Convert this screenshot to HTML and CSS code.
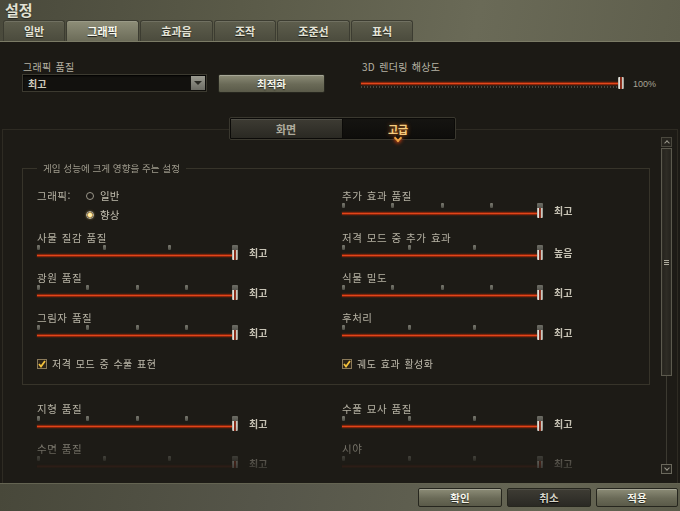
FILE: index.html
```html
<!DOCTYPE html>
<html lang="ko">
<head>
<meta charset="UTF-8">
<title>설정</title>
<link rel="stylesheet" href="styles.css">
</head>
<body>
<div class="window">
  <header class="header">
    <h1 class="title">설정</h1>
    <nav class="tabs">
      <div class="tab short">일반</div>
      <div class="tab active">그래픽</div>
      <div class="tab">효과음</div>
      <div class="tab short">조작</div>
      <div class="tab">조준선</div>
      <div class="tab short">표식</div>
    </nav>
  </header>

  <main class="content">
    <section class="top-controls">
      <div class="control">
        <div class="label">그래픽 품질</div>
        <div class="quality-row">
          <div class="select">최고<span class="select-arrow"></span></div>
          <button class="btn btn-light btn-optimize">최적화</button>
        </div>
      </div>
      <div class="control">
        <div class="label">3D 렌더링 해상도</div>
        <div class="res-row">
          <div class="res-slider">
            <div class="res-track"></div>
            <div class="res-dots"></div>
            <div class="handle res-handle"></div>
          </div>
          <span class="res-value">100%</span>
        </div>
      </div>
    </section>

    <div class="subtabs-wrap">
      <div class="subtabs">
        <div class="subtab">화면</div>
        <div class="subtab active">고급</div>
      </div>
    </div>

    <section class="panel">
      <div class="scroll-view">
        <fieldset class="group">
          <legend>게임 성능에 크게 영향을 주는 설정</legend>
          <div class="grid">
            <div class="radio-setting">
              <span class="radio-title">그래픽:</span>
              <div class="radios">
                <label class="radio"><span class="dot"></span>일반</label>
                <label class="radio checked"><span class="dot"></span>향상</label>
              </div>
            </div>
            <div class="setting">
              <div class="label">추가 효과 품질</div>
              <div class="slider-row">
                <div class="slider"><div class="ticks"><i></i><i></i><i></i><i></i><i></i></div><div class="track"></div><div class="handle"></div></div>
                <span class="value">최고</span>
              </div>
            </div>

            <div class="setting">
              <div class="label">사물 질감 품질</div>
              <div class="slider-row">
                <div class="slider"><div class="ticks"><i></i><i></i><i></i><i></i></div><div class="track"></div><div class="handle"></div></div>
                <span class="value">최고</span>
              </div>
            </div>
            <div class="setting">
              <div class="label">저격 모드 중 추가 효과</div>
              <div class="slider-row">
                <div class="slider"><div class="ticks"><i></i><i></i><i></i><i></i></div><div class="track"></div><div class="handle"></div></div>
                <span class="value">높음</span>
              </div>
            </div>

            <div class="setting">
              <div class="label">광원 품질</div>
              <div class="slider-row">
                <div class="slider"><div class="ticks"><i></i><i></i><i></i><i></i><i></i></div><div class="track"></div><div class="handle"></div></div>
                <span class="value">최고</span>
              </div>
            </div>
            <div class="setting">
              <div class="label">식물 밀도</div>
              <div class="slider-row">
                <div class="slider"><div class="ticks"><i></i><i></i><i></i><i></i><i></i></div><div class="track"></div><div class="handle"></div></div>
                <span class="value">최고</span>
              </div>
            </div>

            <div class="setting">
              <div class="label">그림자 품질</div>
              <div class="slider-row">
                <div class="slider"><div class="ticks"><i></i><i></i><i></i><i></i><i></i></div><div class="track"></div><div class="handle"></div></div>
                <span class="value">최고</span>
              </div>
            </div>
            <div class="setting">
              <div class="label">후처리</div>
              <div class="slider-row">
                <div class="slider"><div class="ticks"><i></i><i></i><i></i><i></i></div><div class="track"></div><div class="handle"></div></div>
                <span class="value">최고</span>
              </div>
            </div>

            <label class="checkbox"><span class="box"><svg width="8" height="8" viewBox="0 0 8 8"><polyline points="1,4 3,6.5 7,1" fill="none" stroke="#f4c23c" stroke-width="1.8"/></svg></span>저격 모드 중 수풀 표현</label>
            <label class="checkbox"><span class="box"><svg width="8" height="8" viewBox="0 0 8 8"><polyline points="1,4 3,6.5 7,1" fill="none" stroke="#f4c23c" stroke-width="1.8"/></svg></span>궤도 효과 활성화</label>
          </div>
        </fieldset>

        <div class="grid lower">
          <div class="setting">
            <div class="label">지형 품질</div>
            <div class="slider-row">
              <div class="slider"><div class="ticks"><i></i><i></i><i></i><i></i><i></i></div><div class="track"></div><div class="handle"></div></div>
              <span class="value">최고</span>
            </div>
          </div>
          <div class="setting">
            <div class="label">수풀 묘사 품질</div>
            <div class="slider-row">
              <div class="slider"><div class="ticks"><i></i><i></i><i></i><i></i></div><div class="track"></div><div class="handle"></div></div>
              <span class="value">최고</span>
            </div>
          </div>
          <div class="setting">
            <div class="label">수면 품질</div>
            <div class="slider-row">
              <div class="slider"><div class="ticks"><i></i><i></i><i></i><i></i></div><div class="track dim"></div><div class="handle"></div></div>
              <span class="value">최고</span>
            </div>
          </div>
          <div class="setting">
            <div class="label">시야</div>
            <div class="slider-row">
              <div class="slider"><div class="ticks"><i></i><i></i><i></i><i></i></div><div class="track dim"></div><div class="handle"></div></div>
              <span class="value">최고</span>
            </div>
          </div>
        </div>
      </div>

      <div class="scrollbar">
        <div class="sb-btn up"></div>
        <div class="sb-thumb"><span class="grip"></span></div>
        <div class="sb-rail"></div>
        <div class="sb-btn down"></div>
      </div>
    </section>
  </main>

  <footer class="footer">
    <button class="btn btn-light">확인</button>
    <button class="btn btn-dark">취소</button>
    <button class="btn btn-light btn-apply">적용</button>
  </footer>
</div>
</body>
</html>
```

FILE: styles.css
```css
* {
  box-sizing: border-box;
}

body {
  margin: 0;
  width: 680px;
  height: 511px;
  overflow: hidden;
  background-color: #1c1a15;
  font-family: "Noto Sans CJK KR", "Noto Sans", sans-serif;
  color: #b4b0a2;
}

.window {
  display: flex;
  flex-direction: column;
  height: 511px;
}

/* header + main tabs */
.header {
  height: 42px;
  padding-left: 3px;
  background: linear-gradient(100deg, #4a4a3c 0%, #5a5a48 35%, #6a6a57 70%, #5f5f4d 100%);
  border-bottom: 1px solid #7b7b66;
}

.title {
  margin: 0;
  height: 20px;
  padding-left: 2px;
  font-size: 15px;
  line-height: 20px;
  font-weight: 700;
  color: #e2e2d4;
  text-shadow: 0 1px 1px #26261e;
}

.tabs {
  display: flex;
  gap: 1px;
  height: 21px;
}

.tab {
  width: 73px;
  height: 21px;
  display: flex;
  align-items: center;
  justify-content: center;
  border: 1px solid #3c3c31;
  border-bottom: none;
  border-radius: 3px 3px 0 0;
  background: linear-gradient(#5e5e4d, #4b4b3d);
  box-shadow: inset 0 1px 0 rgba(255, 255, 255, 0.12);
  font-size: 11px;
  font-weight: 700;
  color: #e4e4d8;
  text-shadow: 0 1px 1px #1e1e18;
}

.tab.short {
  width: 62px;
}

.tab.active {
  background: linear-gradient(#8e8e78, #6c6c59);
  color: #fbfbf2;
}

/* main content */
.content {
  flex: 1;
  display: flex;
  flex-direction: column;
  min-height: 0;
}

.label {
  font-size: 10.5px;
  line-height: 12px;
  letter-spacing: 0.5px;
  word-spacing: 1px;
  color: #b6b2a4;
  white-space: nowrap;
}

.top-controls {
  display: grid;
  grid-template-columns: 339px 1fr;
  padding: 19px 0 0 22px;
}

.top-controls .label {
  font-size: 10px;
  letter-spacing: 0.3px;
  padding-left: 1px;
}

.quality-row {
  display: flex;
  gap: 11px;
  margin-top: 1px;
}

.select {
  width: 185px;
  height: 18px;
  display: flex;
  align-items: center;
  justify-content: space-between;
  padding-left: 5px;
  background-color: #12110e;
  border: 1px solid #3c3a30;
  box-shadow: inset 0 1px 2px #000;
  font-size: 10px;
  font-weight: 700;
  color: #d0ccbc;
}

.select-arrow {
  width: 14px;
  height: 14px;
  margin-right: 1px;
  background: linear-gradient(#9a9a90, #6c6c64);
  position: relative;
}

.select-arrow::after {
  content: "";
  position: absolute;
  left: 3px;
  top: 5px;
  border-left: 4px solid transparent;
  border-right: 4px solid transparent;
  border-top: 4px solid #2a2a24;
}

.btn {
  font-family: inherit;
  height: 19px;
  padding: 0;
  border: 1px solid #26261e;
  border-radius: 2px;
  font-size: 10.5px;
  font-weight: 700;
  cursor: pointer;
  outline: none;
}

.btn-light {
  background: linear-gradient(#8c8c77, #6a6a57 55%, #5a5a49);
  box-shadow: inset 0 1px 0 rgba(255, 255, 255, 0.25);
  color: #f4f4ea;
  text-shadow: 0 1px 1px #22221a;
}

.btn-dark {
  background: linear-gradient(#3e3c34, #2a2924);
  box-shadow: inset 0 1px 0 rgba(255, 255, 255, 0.1);
  color: #d6d4c8;
  text-shadow: 0 1px 1px #000;
}

.btn-optimize {
  width: 107px;
}

.res-row {
  display: flex;
  align-items: center;
  margin-top: 4px;
}

.res-slider {
  position: relative;
  width: 262px;
  height: 14px;
  padding-top: 5px;
}

.res-track {
  width: 257px;
  height: 3px;
  background: linear-gradient(#5a1404, #e2481c 50%, #5a1404);
  box-shadow: 0 0 2px rgba(220, 70, 20, 0.5);
}

.res-dots {
  width: 257px;
  height: 2px;
  margin-top: 1px;
  background: repeating-linear-gradient(90deg, #4a4840 0 1px, transparent 1px 3px);
}

.res-value {
  margin-left: 10px;
  font-family: "Liberation Sans", sans-serif;
  font-size: 9px;
  color: #a8a496;
}

/* sub tabs */
.subtabs-wrap {
  display: flex;
  justify-content: center;
  padding-left: 4px;
  margin-top: 24px;
  margin-bottom: -11px;
  position: relative;
  z-index: 1;
}

.subtabs {
  display: flex;
  gap: 1px;
  width: 227px;
  height: 23px;
  padding: 1px;
  background-color: #0b0a08;
  border: 1px solid #3a382f;
  border-radius: 2px;
}

.subtab {
  flex: 1;
  display: flex;
  align-items: center;
  justify-content: center;
  font-size: 11px;
  font-weight: 700;
  color: #aeaa9c;
  background: linear-gradient(#3d3b33, #2a2923);
  box-shadow: inset 0 1px 0 rgba(255, 255, 255, 0.1);
}

.subtab.active {
  position: relative;
  background: linear-gradient(#151411, #0e0d0b);
  box-shadow: none;
  color: #f6cd7e;
  text-shadow: 0 0 4px #c8661a;
}

.subtab.active::after {
  content: "";
  position: absolute;
  left: 50%;
  bottom: -3px;
  width: 4px;
  height: 4px;
  margin-left: -3px;
  border-right: 2px solid #f0a040;
  border-bottom: 2px solid #f0a040;
  transform: rotate(45deg);
  box-shadow: 1px 1px 4px #d04010;
}

/* scroll panel */
.panel {
  flex: 1;
  display: flex;
  margin: 0 2px;
  min-height: 0;
  border: 1px solid #2e2b23;
  border-bottom: none;
  background-color: #1d1b16;
}

.scroll-view {
  flex: 1;
  height: 338px;
  overflow: hidden;
  padding: 32px 0 0 19px;
  -webkit-mask-image: linear-gradient(#000 calc(100% - 42px), rgba(0, 0, 0, 0.2) 100%);
  mask-image: linear-gradient(#000 calc(100% - 42px), rgba(0, 0, 0, 0.2) 100%);
}

.group {
  width: 628px;
  margin: 0;
  padding: 0 0 14px 14px;
  border: 1px solid #37342a;
}

.group legend {
  padding: 0 6px;
  font-size: 9.6px;
  line-height: 12px;
  color: #9e9a8c;
}

.grid {
  display: grid;
  grid-template-columns: 305px 1fr;
  row-gap: 11px;
  margin-top: 16px;
}

.grid.lower {
  margin-top: 18px;
  padding-left: 15px;
}

.radio-setting {
  display: flex;
}

.radio-title {
  width: 49px;
  font-size: 10.5px;
  line-height: 12px;
  letter-spacing: 0.5px;
}

.radios {
  display: flex;
  flex-direction: column;
  gap: 7px;
}

.radio {
  display: flex;
  align-items: center;
  gap: 6px;
  font-size: 10.5px;
  line-height: 12px;
  color: #c0bcae;
}

.radio .dot {
  width: 8px;
  height: 8px;
  border-radius: 50%;
  border: 1px solid #9a968a;
  background-color: #1a1814;
}

.radio.checked .dot {
  background: radial-gradient(circle, #fff2b0 0 1.5px, #d8a040 2.5px, #2a2418 3px);
  box-shadow: 0 0 2px rgba(230, 180, 80, 0.6);
  border-color: #bdb8a8;
}

.setting {
  display: flex;
  flex-direction: column;
}

.slider-row {
  display: flex;
  align-items: center;
}

.slider {
  position: relative;
  width: 200px;
  height: 17px;
  padding-top: 1px;
}

.ticks {
  display: flex;
  justify-content: space-between;
  height: 5px;
}

.ticks i {
  width: 3px;
  height: 5px;
  border-radius: 1px;
  background: linear-gradient(#7c7c72, #505048);
}

.track {
  width: 196px;
  height: 3px;
  margin-top: 4px;
  background: linear-gradient(#5a1404, #e0461a 50%, #5a1404);
  box-shadow: 0 0 2px rgba(220, 70, 20, 0.45);
}

.track.dim {
  opacity: 0.35;
}

.handle {
  position: absolute;
  top: 1px;
  left: 195px;
  width: 6px;
  height: 15px;
  border-radius: 1px;
  background:
    linear-gradient(#6e6e66, #56564f) top / 100% 5px no-repeat,
    linear-gradient(90deg, #8c8c84 0, #ecece4 1px, #d8d8d0 2px, #7a2416 2px, #9a3a24 4px, #dcdcd4 4px, #8c8c84 6px);
}

.res-handle {
  top: 0;
  left: 257px;
  height: 12px;
  background: linear-gradient(90deg, #8c8c84 0, #ecece4 1px, #d8d8d0 2px, #7a2416 2px, #9a3a24 4px, #dcdcd4 4px, #8c8c84 6px);
}

.value {
  margin-left: 12px;
  font-size: 10px;
  font-weight: 700;
  color: #c6c2b4;
}

.checkbox {
  display: flex;
  align-items: center;
  gap: 5px;
  margin-top: 6px;
  font-size: 10px;
  line-height: 12px;
  letter-spacing: 0.5px;
  word-spacing: 1px;
  color: #c0bcae;
}

.checkbox .box {
  width: 10px;
  height: 10px;
  display: flex;
  align-items: center;
  justify-content: center;
  border: 1px solid #8a7a5a;
  background-color: #2c2419;
}

/* scrollbar */
.scrollbar {
  width: 11px;
  margin: 7px 5px 9px 0;
  display: flex;
  flex-direction: column;
}

.sb-btn {
  height: 10px;
  border: 1px solid #4a483e;
  background-color: #26241e;
  position: relative;
}

.sb-btn::after {
  content: "";
  position: absolute;
  left: 3px;
  width: 3px;
  height: 3px;
  border-right: 1px solid #9a988c;
  border-bottom: 1px solid #9a988c;
}

.sb-btn.up::after {
  top: 3px;
  transform: rotate(-135deg);
}

.sb-btn.down {
  border-color: #6a685c;
}

.sb-btn.down::after {
  top: 1px;
  transform: rotate(45deg);
}

.sb-thumb {
  height: 228px;
  margin-top: 1px;
  border: 1px solid #5c5a4e;
  background: linear-gradient(90deg, #24221c, #2e2c25 50%, #24221c);
  box-shadow: inset 0 0 0 1px #2c2a23;
  display: flex;
  align-items: center;
  justify-content: center;
}

.grip {
  width: 5px;
  height: 5px;
  background: repeating-linear-gradient(#aeac9e 0 1px, transparent 1px 2px);
}

.sb-rail {
  flex: 1;
  width: 1px;
  margin: 0 auto;
  background-color: #3c3a31;
}

/* footer */
.footer {
  height: 28px;
  display: flex;
  justify-content: flex-end;
  align-items: center;
  gap: 5px;
  padding-right: 2px;
  background: linear-gradient(100deg, #48483a 0%, #56564a 40%, #666654 80%, #5c5c4b 100%);
  border-top: 1px solid #646452;
}

.footer .btn {
  width: 84px;
}

.footer .btn-apply {
  width: 82px;
}
```
